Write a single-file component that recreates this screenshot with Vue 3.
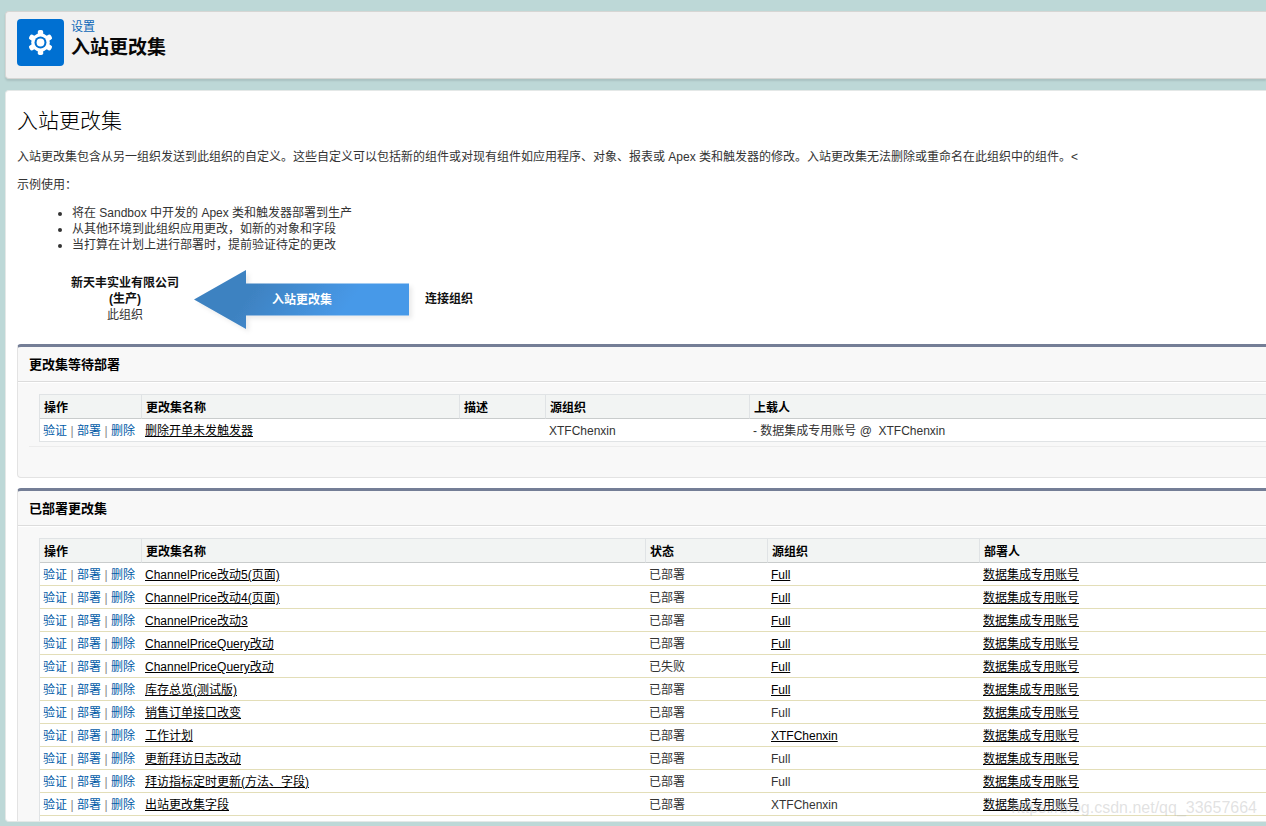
<script setup>
const actions = ['验证', '部署', '删除']

const waiting = [
  { name: '删除开单未发触发器', desc: '', org: 'XTFChenxin', by: '- 数据集成专用账号 @ \u00a0XTFChenxin' }
]

const deployed = [
  { name: 'ChannelPrice改动5(页面)', status: '已部署', org: 'Full', linked: true },
  { name: 'ChannelPrice改动4(页面)', status: '已部署', org: 'Full', linked: true },
  { name: 'ChannelPrice改动3', status: '已部署', org: 'Full', linked: true },
  { name: 'ChannelPriceQuery改动', status: '已部署', org: 'Full', linked: true },
  { name: 'ChannelPriceQuery改动', status: '已失败', org: 'Full', linked: true },
  { name: '库存总览(测试版)', status: '已部署', org: 'Full', linked: true },
  { name: '销售订单接口改变', status: '已部署', org: 'Full', linked: false },
  { name: '工作计划', status: '已部署', org: 'XTFChenxin', linked: true },
  { name: '更新拜访日志改动', status: '已部署', org: 'Full', linked: false },
  { name: '拜访指标定时更新(方法、字段)', status: '已部署', org: 'Full', linked: false },
  { name: '出站更改集字段', status: '已部署', org: 'XTFChenxin', linked: false }
]
const deployer = '数据集成专用账号'
</script>

<template>
  <div class="shell">
    <header class="page-header">
      <span class="header-icon">
        <svg viewBox="0 0 25 25" width="25" height="25" aria-hidden="true">
          <g fill="#fff">
            <circle cx="12.500" cy="12.500" r="9.300" />
            <rect v-for="a in 6" :key="a" x="9.800" y="0" width="5.400" height="6" rx="1.800" :transform="`rotate(${a * 60} 12.5 12.5)`" />
          </g>
          <circle cx="12.500" cy="12.500" r="6" fill="#0070d2" />
          <circle cx="12.500" cy="12.500" r="3.900" fill="#fff" />
        </svg>
      </span>
      <div>
        <a href="#" class="crumb">设置</a>
        <h1>入站更改集</h1>
      </div>
    </header>

    <main class="content">
      <h2 class="title">入站更改集</h2>
      <p class="intro">入站更改集包含从另一组织发送到此组织的自定义。这些自定义可以包括新的组件或对现有组件如应用程序、对象、报表或 Apex 类和触发器的修改。入站更改集无法删除或重命名在此组织中的组件。&lt;</p>
      <p class="intro">示例使用：</p>
      <ul class="examples">
        <li>将在 Sandbox 中开发的 Apex 类和触发器部署到生产</li>
        <li>从其他环境到此组织应用更改，如新的对象和字段</li>
        <li>当打算在计划上进行部署时，提前验证待定的更改</li>
      </ul>

      <div class="flow">
        <div class="org">
          <strong>新天丰实业有限公司<br />(生产)</strong><br />此组织
        </div>
        <div class="arrow">
          <svg viewBox="0 0 222 60" width="222" height="60" aria-hidden="true">
            <defs>
              <linearGradient id="arrow-fill" gradientUnits="userSpaceOnUse" x1="70" y1="5" x2="141" y2="55">
                <stop offset="0" stop-color="#3e82c1" />
                <stop offset="1" stop-color="#4799e8" />
              </linearGradient>
              <filter id="arrow-shadow" x="-5%" y="-10%" width="115%" height="130%">
                <feDropShadow dx="3" dy="3" stdDeviation="2" flood-color="#000" flood-opacity="0.08" />
              </filter>
            </defs>
            <path d="M0 30.500 52 1V14.500H215V46.500H52V60Z" fill="url(#arrow-fill)" filter="url(#arrow-shadow)" />
          </svg>
          <span class="arrow-label">入站更改集</span>
        </div>
        <strong class="source">连接组织</strong>
      </div>

      <section class="panel">
        <h3>更改集等待部署</h3>
        <table>
          <colgroup><col class="c-action" /><col class="w-name" /><col class="w-desc" /><col class="w-org" /><col /></colgroup>
          <thead>
            <tr><th>操作</th><th>更改集名称</th><th>描述</th><th>源组织</th><th>上载人</th></tr>
          </thead>
          <tbody>
            <tr v-for="row in waiting" :key="row.name">
              <td class="acts">
                <template v-for="(a, i) in actions" :key="a"><span v-if="i" class="sep">|</span><a href="#">{{ a }}</a></template>
              </td>
              <td><a href="#" class="ref">{{ row.name }}</a></td>
              <td>{{ row.desc }}</td>
              <td>{{ row.org }}</td>
              <td>{{ row.by }}</td>
            </tr>
          </tbody>
        </table>
        <div class="panel-foot"></div>
      </section>

      <section class="panel deployed">
        <h3>已部署更改集</h3>
        <table>
          <colgroup><col class="c-action" /><col class="d-name" /><col class="d-status" /><col class="d-org" /><col /></colgroup>
          <thead>
            <tr><th>操作</th><th>更改集名称</th><th>状态</th><th>源组织</th><th>部署人</th></tr>
          </thead>
          <tbody>
            <tr v-for="(row, n) in deployed" :key="n">
              <td class="acts">
                <template v-for="(a, i) in actions" :key="a"><span v-if="i" class="sep">|</span><a href="#">{{ a }}</a></template>
              </td>
              <td><a href="#" class="ref">{{ row.name }}</a></td>
              <td>{{ row.status }}</td>
              <td><a v-if="row.linked" href="#" class="ref">{{ row.org }}</a><template v-else>{{ row.org }}</template></td>
              <td><a href="#" class="ref">{{ deployer }}</a></td>
            </tr>
            <tr aria-hidden="true"><td colspan="5"></td></tr>
          </tbody>
        </table>
      </section>
    </main>
    <div class="watermark">https://blog.csdn.net/qq_33657664</div>
  </div>
</template>

<style>
body {
  margin: 0;
  background: #bdd8d7;
}
</style>

<style scoped>
.shell {
  position: relative;
  box-sizing: border-box;
  height: 100vh;
  padding: 11px 0 4px 5px;
  display: flex;
  flex-direction: column;
  gap: 11px;
  overflow: hidden;
  font: 12px/16px "Liberation Sans", "Noto Sans CJK SC", sans-serif;
  color: #333;
}
.page-header {
  display: flex;
  gap: 7px;
  padding: 7px 11px 12px;
  border: 1px solid #d6d6d4;
  border-right: 0;
  border-radius: 4px 0 0 4px;
  background: #f1f1f1;
  box-shadow: 0 2px 2px rgba(0, 0, 0, 0.1);
}
.header-icon {
  display: flex;
  align-items: center;
  justify-content: center;
  width: 47px;
  height: 47px;
  border-radius: 4px;
  background: #0070d2;
}
.crumb {
  display: block;
  color: #0b67b8;
  text-decoration: none;
}
h1 {
  margin: 0;
  font-size: 19px;
  line-height: 26px;
  color: #080707;
}
.content {
  flex: 1;
  min-height: 0;
  overflow: hidden;
  padding: 0 0 0 11px;
  border: 1px solid #e4e8e7;
  border-right: 0;
  border-radius: 4px 0 0 4px;
  background: #fff;
}
.title {
  margin: 16px 0 14px;
  font-size: 21px;
  line-height: 28px;
  font-weight: 300;
  color: #000;
}
.intro {
  margin: 0 0 12px;
  line-height: 16px;
}
.examples {
  margin: 0;
  padding-left: 55px;
}
.flow {
  display: flex;
  align-items: center;
  margin: 16px 0 15px 48px;
}
.org {
  width: 120px;
  text-align: center;
}
.org strong,
.source {
  color: #111;
}
.arrow {
  position: relative;
  margin-left: 9px;
}
.arrow svg {
  display: block;
  overflow: visible;
}
.arrow-label {
  position: absolute;
  top: 23px;
  left: 0;
  width: 216px;
  text-align: center;
  font-weight: bold;
  color: #fff;
}
.source {
  margin-left: 9px;
}
.panel {
  border: 1px solid #e3e3e3;
  border-top: 3px solid #747e96;
  border-right: 0;
  border-radius: 4px 0 0 4px;
  background: #f8f8f8;
}
.panel + .panel {
  margin-top: 10px;
}
h3 {
  margin: 0 0 12px;
  padding: 9px 11px 7px;
  border-bottom: 1px solid #dcdcdc;
  box-shadow: 0 1px #fff;
  font-size: 13px;
  line-height: 18px;
  color: #000;
}
table {
  width: calc(100% - 21px);
  margin-left: 21px;
  table-layout: fixed;
  border-collapse: separate;
  border-spacing: 0;
  border: 1px solid #e0e3e5;
  border-right: 0;
  border-bottom: 0;
  background: #fff;
}
.c-action { width: 102px; }
.w-name { width: 318px; }
.w-desc { width: 86px; }
.w-org { width: 204px; }
.d-name { width: 504px; }
.d-status { width: 122px; }
.d-org { width: 212px; }
th {
  padding: 5px 4px 2px;
  border-right: 1px solid #e0e3e5;
  border-bottom: 1px solid #c9cccc;
  background: #f2f4f3;
  text-align: left;
  color: #000;
}
th:last-child {
  border-right: 0;
}
td {
  height: 16px;
  padding: 4px 3px 2px;
  border-bottom: 1px solid #e3deb8;
  white-space: nowrap;
}
.panel:not(.deployed) td {
  border-bottom-color: #e0e3e5;
}
.acts a {
  color: #015ba7;
  text-decoration: none;
}
.sep {
  display: inline-block;
  width: 10px;
  text-align: center;
  color: #888;
}
.ref {
  color: #000;
  text-decoration: underline;
}
.panel-foot {
  height: 30px;
  margin: 4px 0 0 11px;
  border-top: 1px solid #ececec;
}
.watermark {
  position: absolute;
  right: 9px;
  bottom: 8px;
  font-size: 16px;
  line-height: 20px;
  color: rgba(190, 190, 190, 0.45);
  pointer-events: none;
}
</style>
